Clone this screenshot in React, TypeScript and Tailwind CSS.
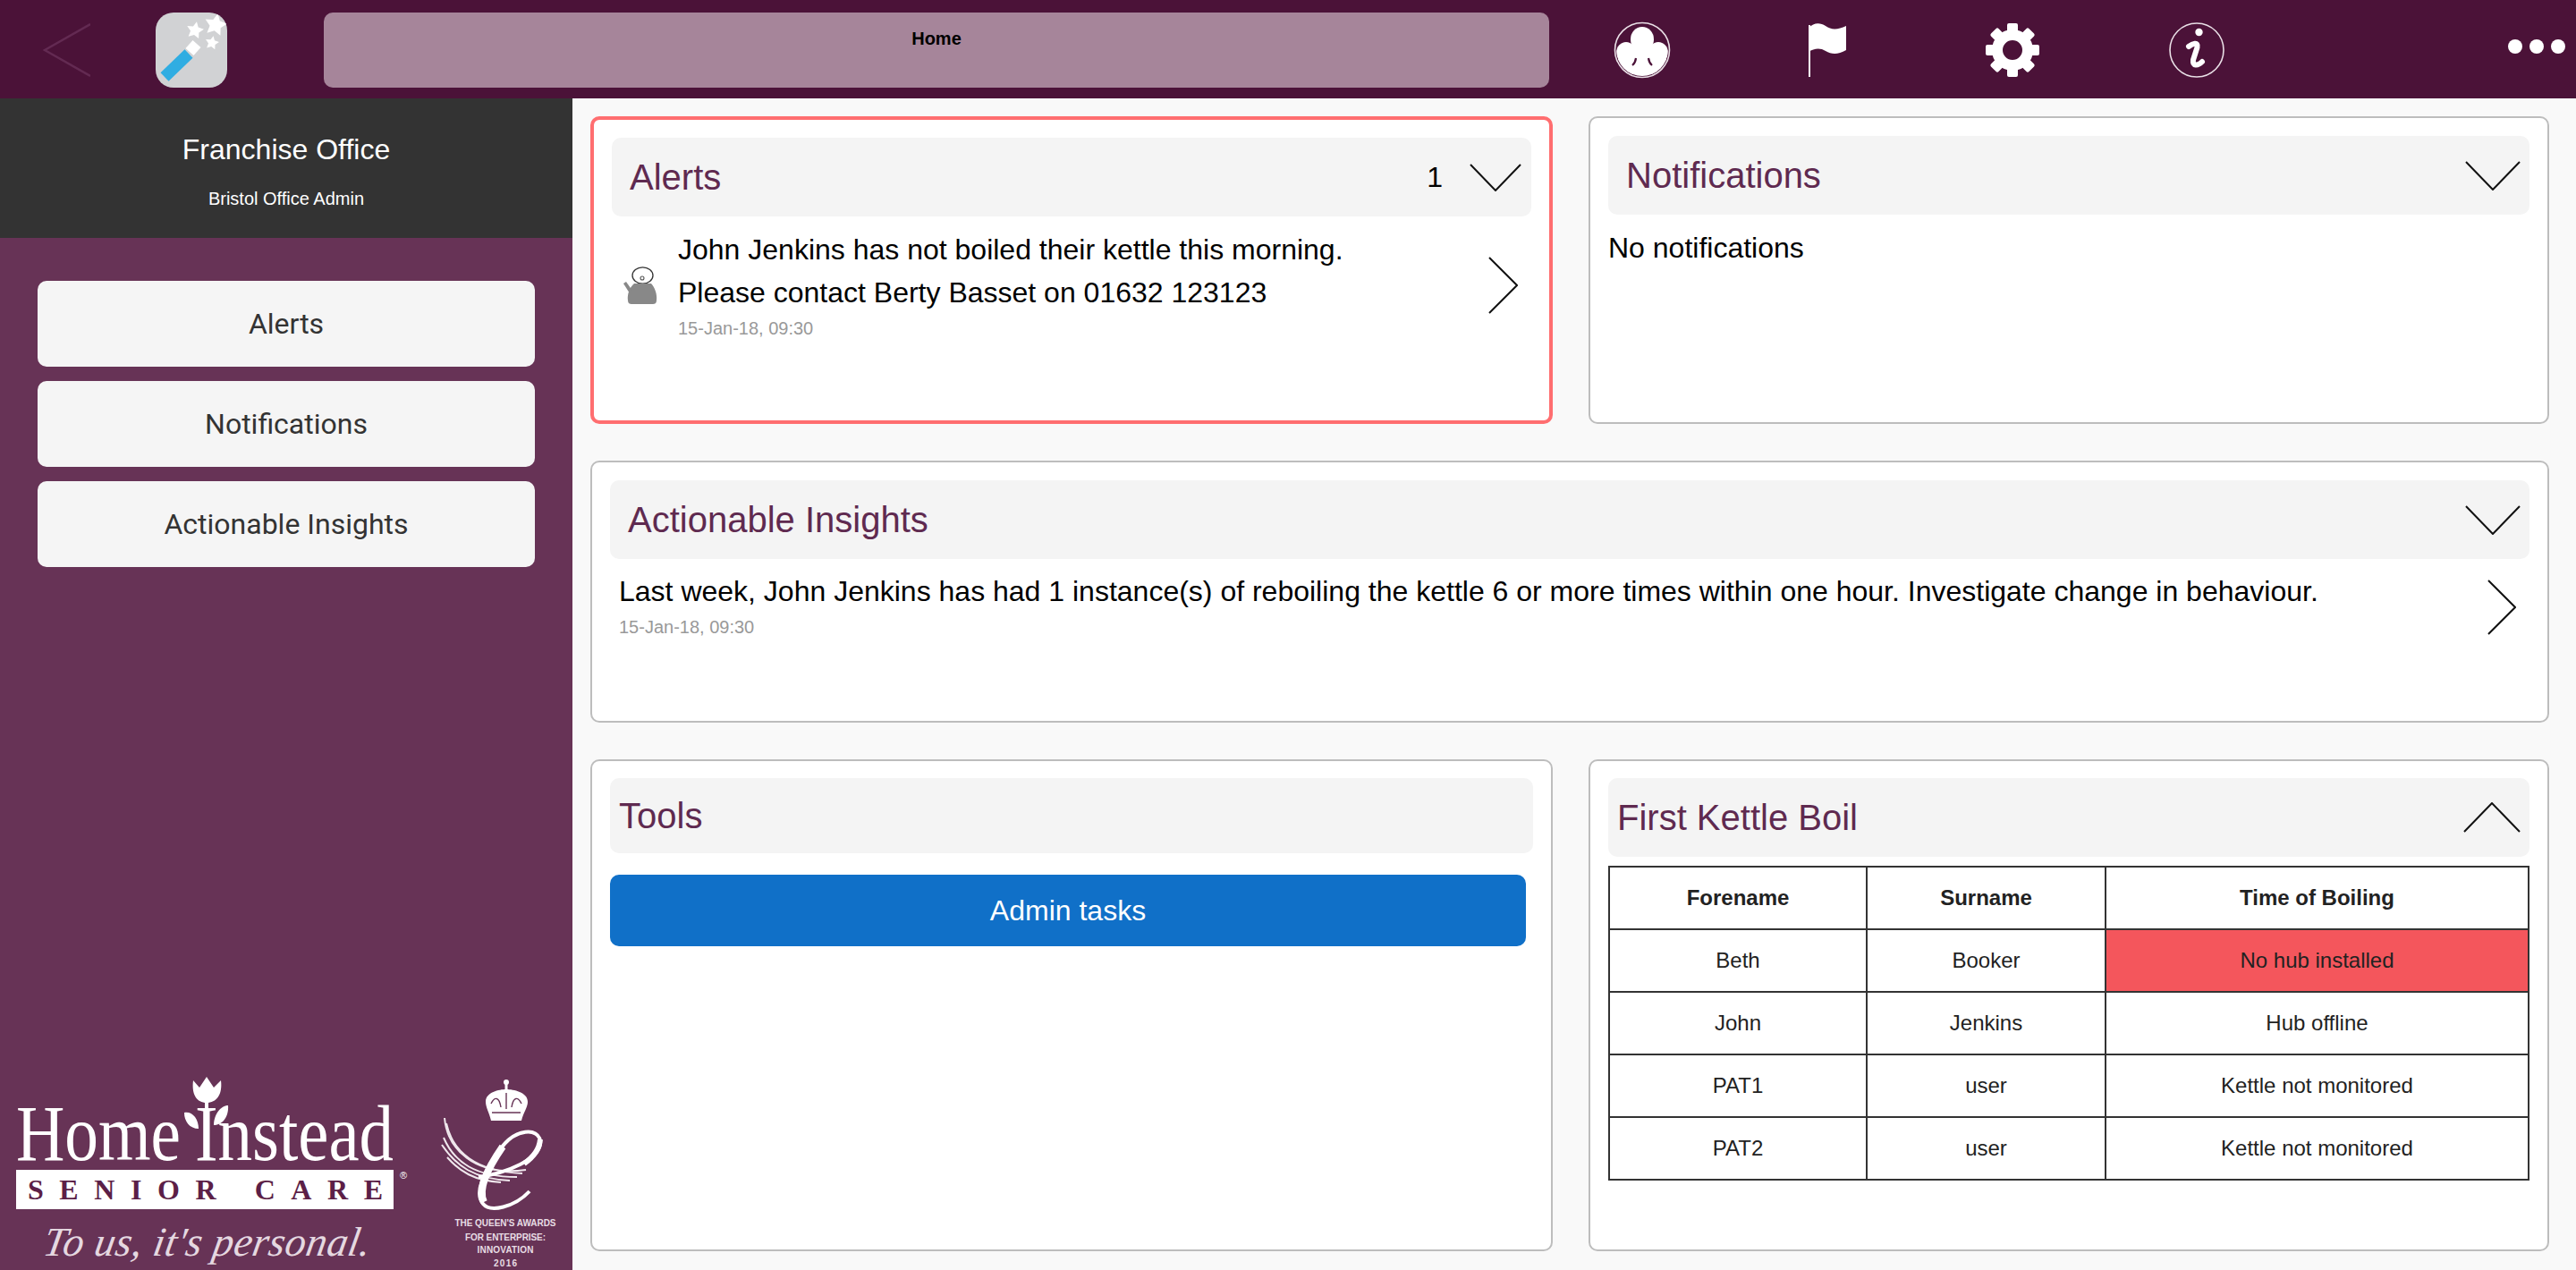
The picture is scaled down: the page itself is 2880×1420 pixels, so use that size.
import React from "react";

// Chevrons used on the card headers and rows
const ChevronDown = ({ w = 62, h = 33 }: { w?: number; h?: number }) => (
  <svg width={w} height={h} viewBox={`0 0 ${w} ${h}`} fill="none" stroke="#111" strokeWidth="2">
    <polyline points={`1,1 ${w / 2},${h - 1} ${w - 1},1`} />
  </svg>
);

const ChevronUp = () => (
  <svg width="64" height="34" viewBox="0 0 64 34" fill="none" stroke="#111" strokeWidth="2">
    <polyline points="1,33 32,1 63,33" />
  </svg>
);

const ChevronRight = ({ w = 33, h = 64 }: { w?: number; h?: number }) => (
  <svg width={w} height={h} viewBox={`0 0 ${w} ${h}`} fill="none" stroke="#111" strokeWidth="2">
    <polyline points={`1,1 ${w - 1},${h / 2} 1,${h - 1}`} />
  </svg>
);

const starPoints = (cx: number, cy: number, r: number) =>
  Array.from({ length: 10 }, (_, i) => {
    const a = (i * Math.PI) / 5 - Math.PI / 2 + 0.2;
    const d = i % 2 === 0 ? r : r * 0.5;
    return `${cx + d * Math.cos(a)},${cy + d * Math.sin(a)}`;
  }).join(" ");

const WandIcon = () => (
  <div className="w-[80px] h-[84px] rounded-[20px] bg-[#d1d2d4] overflow-hidden shrink-0">
    <svg width="80" height="84" viewBox="0 0 80 84">
      <line x1="10" y1="72" x2="37" y2="46" stroke="#30ade2" strokeWidth="13" />
      <line x1="38" y1="44" x2="46" y2="35" stroke="#fff" strokeWidth="12" />
      <polygon points={starPoints(67, 14, 13)} fill="#fff" />
      <polygon points={starPoints(44, 20, 10)} fill="#fff" />
      <polygon points={starPoints(63, 34, 8)} fill="#fff" />
    </svg>
  </div>
);

const GroupIcon = () => (
  <svg width="64" height="64" viewBox="0 0 64 64" className="shrink-0">
    <circle cx="32" cy="32" r="30.5" fill="none" stroke="#e9dfe6" strokeWidth="1.6" />
    <clipPath id="groupClip">
      <circle cx="32" cy="32" r="29" />
    </clipPath>
    <g clipPath="url(#groupClip)" fill="#fff">
      <ellipse cx="32" cy="20" rx="13" ry="14" />
      <path d="M22 28 C20 40 14 50 14 64 L50 64 C50 50 44 40 42 28 Z" />
      <ellipse cx="14" cy="35" rx="11" ry="12" />
      <ellipse cx="50" cy="35" rx="11" ry="12" />
      <path d="M3 42 L24 42 L22 64 L3 64 Z" />
      <path d="M40 42 L61 42 L61 64 L42 64 Z" />
    </g>
    <path d="M25 41 C24.5 45 23.5 47 21 49 M39 41 C39.5 45 40.5 47 43 49" fill="none" stroke="#4b1238" strokeWidth="2.2" />
    <path d="M3 46 C5 49 6 50 6 53 M61 46 C59 49 58 50 58 53" fill="none" stroke="#4b1238" strokeWidth="1.5" />
  </svg>
);

const FlagIcon = () => (
  <svg width="42" height="60" viewBox="0 0 42 60" fill="#fff" className="shrink-0">
    <rect x="0" y="2" width="2" height="58" />
    <path d="M0 5 C6 -1 13 -1 19 3 C26 8 33 7 42 3 L42 30 C33 35 26 35 19 31 C13 27 6 28 0 32 Z" />
  </svg>
);

const GearIcon = () => (
  <svg width="60" height="60" viewBox="0 0 60 60" fill="#fff" className="shrink-0">
    <circle cx="30" cy="30" r="17" fill="none" stroke="#fff" strokeWidth="12" />
    {[0, 45, 90, 135, 180, 225, 270, 315].map((deg) => (
      <rect key={deg} x="24" y="0" width="12" height="10" rx="2" transform={`rotate(${deg} 30 30)`} />
    ))}
  </svg>
);

const InfoIcon = () => (
  <svg width="62" height="62" viewBox="0 0 62 62" className="shrink-0">
    <circle cx="31" cy="31" r="30" fill="none" stroke="#e9dfe6" strokeWidth="1.6" />
    <circle cx="33.5" cy="11" r="4.2" fill="#fff" />
    <path d="M22 27 C26 24 33 21 31.5 28 L27 42 C26 49 32 49 37 44" fill="none" stroke="#fff" strokeWidth="6" strokeLinecap="round" />
  </svg>
);

const KettleIcon = () => (
  <svg width="38" height="42" viewBox="0 0 38 42" className="shrink-0">
    <ellipse cx="21.5" cy="10" rx="11.5" ry="9.2" fill="#fff" stroke="#333" strokeWidth="1.3" />
    <circle cx="21" cy="13" r="2" fill="none" stroke="#555" strokeWidth="1.1" />
    <path d="M5 38 C4 31 7 23 12 19 L31 19 C35 23 38 31 37 38 C37 41 35 42 33 42 L9 42 C7 42 5 41 5 38 Z" fill="#888" />
    <polygon points="0,19 3,17 10,27 7,30" fill="#888" />
  </svg>
);

// Home Instead and Queen's Award logos, one drawing pinned to the bottom of the sidebar
const LogoBlock = () => (
  <svg width="640" height="216" viewBox="0 0 640 216" className="block mt-auto shrink-0">
    <g fill="#fff">
      <text x="18" y="93" fontFamily="'Liberation Serif', serif" fontSize="88" textLength="184" lengthAdjust="spacingAndGlyphs">
        Home
      </text>
      <text x="218" y="93" fontFamily="'Liberation Serif', serif" fontSize="88" textLength="222" lengthAdjust="spacingAndGlyphs">
        Instead
      </text>
      <path d="M216 4 L223 12 L231 0 L239 12 L247 4 C249 20 242 29 231 29 C220 29 214 20 216 4 Z" />
      <rect x="229" y="28" width="4" height="12" />
      <path d="M206 40 C214 38 222 46 222 58 C212 58 206 50 206 40 Z" />
      <path d="M255 32 C247 32 239 42 239 54 C249 54 256 44 255 32 Z" />
      <rect x="18" y="104" width="422" height="44" />
      <text x="447" y="114" fontFamily="'Liberation Sans', sans-serif" fontSize="11">®</text>
    </g>
    <text x="31" y="137" fill="#5c1f47" fontFamily="'Liberation Serif', serif" fontWeight="700" fontSize="32" textLength="397">
      SENIOR CARE
    </text>
    <text x="47" y="200" transform="translate(35 0) skewX(-10)" fill="#e5d8e0" fontFamily="'Liberation Serif', serif" fontStyle="italic" fontSize="46" textLength="365">
      To us, it's personal.
    </text>
    {/* crown */}
    <g fill="#fff">
      <circle cx="566" cy="6" r="3" />
      <rect x="564.5" y="8" width="3" height="7" />
      <path d="M543 28 C543 17 558 14 566 14 C574 14 590 17 590 28 C590 34 585 40 583 49 L549 49 C547 40 543 34 543 28 Z" />
    </g>
    <path d="M549 30 C553 22 558 22 560 34 M566 18 L566 36 M583 30 C579 22 574 22 572 34 M550 40 L582 40" fill="none" stroke="#673356" strokeWidth="1.4" />
    {/* feathers and the script e */}
    <g fill="none" stroke="#f0e8ed" strokeWidth="2">
      <path d="M497 46 C500 80 530 112 588 104" />
      <path d="M499 52 C506 84 532 106 584 108" />
      <path d="M496 68 C508 96 532 112 578 112" />
      <path d="M494 76 C510 100 530 114 570 116" />
      <path d="M500 90 C514 106 530 116 560 118" />
    </g>
    <path d="M535 112 C565 108 606 92 604 72 C602 56 576 58 560 80 C540 108 530 130 540 142 C548 152 575 146 592 128" fill="none" stroke="#fff" strokeWidth="4" />
    <path d="M562 78 C544 104 534 126 541 140" fill="none" stroke="#fff" strokeWidth="8" />
    <path d="M604 70 C603 82 596 90 586 97" fill="none" stroke="#fff" strokeWidth="6" />
    <g fill="#e8dde4" fontFamily="'Liberation Sans', sans-serif" fontSize="10" fontWeight="700" textAnchor="middle">
      <text x="565" y="167" textLength="113">THE QUEEN'S AWARDS</text>
      <text x="565" y="183" textLength="90">FOR ENTERPRISE:</text>
      <text x="565" y="197" textLength="63">INNOVATION</text>
      <text x="565" y="212" textLength="26">2016</text>
    </g>
  </svg>
);

const Header = () => (
  <header className="h-[110px] bg-[#4b1238] flex items-center pt-[2px] shrink-0">
    <svg width="53" height="60" viewBox="0 0 53 60" fill="none" stroke="#632a52" strokeWidth="2.5" className="ml-[48px] shrink-0">
      <polyline points="53,1 2,30 53,59" />
    </svg>
    <div className="ml-[73px]">
      <WandIcon />
    </div>
    <div className="ml-[108px] w-[1370px] h-[84px] rounded-[10px] bg-[#a6859a] pt-[17px] text-center text-[20px] leading-[24px] font-bold text-black">
      Home
    </div>
    <div className="ml-[72px]">
      <GroupIcon />
    </div>
    <div className="ml-[154px]">
      <FlagIcon />
    </div>
    <div className="ml-[156px]">
      <GearIcon />
    </div>
    <div className="ml-[145px]">
      <InfoIcon />
    </div>
    <div className="ml-[317px] -mt-[8px] flex gap-[8px]">
      <span className="w-[16px] h-[16px] rounded-full bg-white" />
      <span className="w-[16px] h-[16px] rounded-full bg-white" />
      <span className="w-[16px] h-[16px] rounded-full bg-white" />
    </div>
  </header>
);

const Sidebar = () => (
  <aside className="w-[640px] bg-[#673356] flex flex-col shrink-0">
    <div className="h-[156px] bg-[#333333] text-white text-center pt-[38px]">
      <div className="text-[32px] leading-[38px]">Franchise Office</div>
      <div className="text-[20px] leading-[24px] mt-[24px]">Bristol Office Admin</div>
    </div>
    <nav className="px-[42px] pt-[48px] flex flex-col gap-[16px] font-['Roboto',sans-serif]">
      {["Alerts", "Notifications", "Actionable Insights"].map((label) => (
        <button
          key={label}
          className="h-[96px] rounded-[10px] bg-[#f5f5f5] text-[32px] text-[#333333] text-center"
        >
          {label}
        </button>
      ))}
    </nav>
    <LogoBlock />
  </aside>
);

const Card = ({ className, children }: { className: string; children: React.ReactNode }) => (
  <section className={`bg-white rounded-[10px] ${className}`}>{children}</section>
);

const CardHead = ({ className, title, children }: { className: string; title: string; children?: React.ReactNode }) => (
  <div className={`bg-[#f4f4f4] rounded-[10px] flex items-center text-[40px] text-[#5f2a50] ${className}`}>
    <h2 className="font-normal">{title}</h2>
    <div className="ml-auto flex items-center">{children}</div>
  </div>
);

const rows = [
  ["Beth", "Booker", "No hub installed"],
  ["John", "Jenkins", "Hub offline"],
  ["PAT1", "user", "Kettle not monitored"],
  ["PAT2", "user", "Kettle not monitored"],
];

const KettleTable = () => (
  <table className="w-[1030px] mt-[10px] table-fixed border-collapse text-[24px] text-[#222222] text-center">
    <thead>
      <tr className="h-[70px]">
        <th className="w-[288px] border-2 border-[#333333]">Forename</th>
        <th className="w-[267px] border-2 border-[#333333]">Surname</th>
        <th className="border-2 border-[#333333]">Time of Boiling</th>
      </tr>
    </thead>
    <tbody>
      {rows.map((row, i) => (
        <tr key={i} className="h-[70px]">
          <td className="border-2 border-[#333333]">{row[0]}</td>
          <td className="border-2 border-[#333333]">{row[1]}</td>
          <td className={`border-2 border-[#333333] ${i === 0 ? "bg-[#f4565c]" : ""}`}>{row[2]}</td>
        </tr>
      ))}
    </tbody>
  </table>
);

export default function App() {
  return (
    <div className="w-[2880px] h-[1420px] flex flex-col overflow-hidden bg-[#f9f9f9] font-['Liberation_Sans',sans-serif]">
      <Header />
      <div className="flex flex-1 min-h-0">
        <Sidebar />
        <main className="flex-1 grid grid-cols-[1076px_1074px] grid-rows-[344px_293px_550px] gap-x-[40px] gap-y-[41px] pl-[20px] pt-[20px]">
          <Card className="border-4 border-[#ff6e70] p-[20px]">
            <CardHead className="h-[88px] pl-[20px] pr-[11px]" title="Alerts">
              <span className="text-[32px] text-black mr-[30px]">1</span>
              <ChevronDown w={58} h={31} />
            </CardHead>
            <div className="flex items-center mt-[13px] pl-[13px] pr-[15px]">
              <KettleIcon />
              <div className="ml-[23px]">
                <p className="text-[32px] leading-[48px] text-black">John Jenkins has not boiled their kettle this morning.</p>
                <p className="text-[32px] leading-[48px] text-black">Please contact Berty Basset on 01632 123123</p>
                <p className="text-[20px] leading-[32px] text-[#999999]">15-Jan-18, 09:30</p>
              </div>
              <div className="ml-auto">
                <ChevronRight />
              </div>
            </div>
          </Card>

          <Card className="border-2 border-[#bdbdbd] p-[20px]">
            <CardHead className="h-[88px] pl-[20px] pr-[10px]" title="Notifications">
              <ChevronDown />
            </CardHead>
            <p className="text-[32px] leading-[48px] text-black mt-[13px]">No notifications</p>
          </Card>

          <Card className="col-span-2 border-2 border-[#bdbdbd] p-[20px]">
            <CardHead className="h-[88px] pl-[20px] pr-[10px]" title="Actionable Insights">
              <ChevronDown />
            </CardHead>
            <div className="flex items-center mt-[12px] pl-[10px] pr-[15px]">
              <div className="pb-[4px]">
                <p className="text-[32px] leading-[48px] text-black">
                  Last week, John Jenkins has had 1 instance(s) of reboiling the kettle 6 or more times within one hour. Investigate change in behaviour.
                </p>
                <p className="text-[20px] leading-[32px] text-[#999999]">15-Jan-18, 09:30</p>
              </div>
              <div className="ml-auto">
                <ChevronRight w={32} h={62} />
              </div>
            </div>
          </Card>

          <Card className="border-2 border-[#bdbdbd] p-[20px] pt-[19px]">
            <CardHead className="h-[84px] pl-[10px]" title="Tools" />
            <button className="block w-[1024px] h-[80px] mt-[24px] rounded-[10px] bg-[#1070c8] text-[32px] text-white text-center">
              Admin tasks
            </button>
          </Card>

          <Card className="border-2 border-[#bdbdbd] p-[20px] pt-[19px]">
            <CardHead className="h-[88px] pl-[10px] pr-[10px]" title="First Kettle Boil">
              <ChevronUp />
            </CardHead>
            <KettleTable />
          </Card>
        </main>
      </div>
    </div>
  );
}
